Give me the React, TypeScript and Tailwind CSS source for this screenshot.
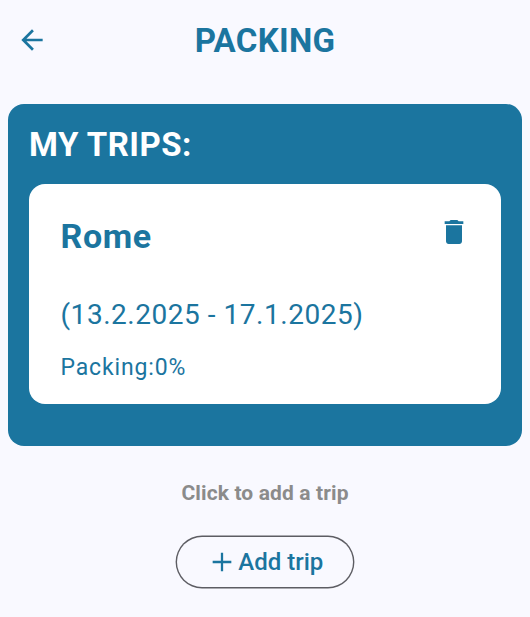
export default function App() {
  return (
    <main className="flex h-[617px] w-[530px] flex-col overflow-hidden bg-[#f9f9ff] font-['Roboto',sans-serif] text-[#1b759f]">
      <header className="grid h-[104px] grid-cols-[64px_1fr_64px] items-start">
        <button aria-label="Back" className="pt-[24px] pl-[15.7px]">
          <svg width="32" height="32" viewBox="0 0 24 24" fill="currentColor">
            <path d="M20 11H7.83l5.59-5.59L12 4l-8 8 8 8 1.41-1.41L7.83 13H20v-2z" />
          </svg>
        </button>
        <h1 className="pt-[21px] text-center text-[33px] leading-[40px] font-bold tracking-[0.3px]">PACKING</h1>
      </header>
      <section className="mx-2 h-[342px] rounded-[16px] bg-[#1b759f] px-[21px] pt-[20.4px]">
        <h2 className="h-[60px] pt-[0.6px] text-[33px] leading-[40px] font-bold tracking-[0.5px] text-white">MY TRIPS:</h2>
        <article className="h-[219.6px] rounded-[16px] bg-white px-[31.5px] pt-[32px]">
          <div className="flex h-[79px] justify-between">
            <h3 className="text-[34px] leading-[40px] font-bold tracking-[0.6px]">Rome</h3>
            <button aria-label="Delete trip" className="h-[32px]">
              <svg width="32" height="32" viewBox="0 0 24 24" fill="currentColor">
                <path d="M6 19c0 1.1.9 2 2 2h8c1.1 0 2-.9 2-2V7H6v12zM19 4h-3.5l-1-1h-5l-1 1H5v2h14V4z" />
              </svg>
            </button>
          </div>
          <p className="h-[54px] text-[28px] leading-[40px] tracking-[0.53px]">(13.2.2025 - 17.1.2025)</p>
          <p className="text-[23px] leading-[37px] tracking-[0.85px]">Packing:0%</p>
        </article>
      </section>
      <p className="pt-[32px] text-center text-[21px] leading-[30px] font-bold tracking-[0.12px] text-[#8b8b8b]">Click to add a trip</p>
      <button className="mt-[29px] flex h-[49.5px] w-[176.4px] items-center self-center rounded-full pl-[29.5px] text-[24px] font-medium shadow-[0_0_0_1.4px_#5d5d63]">
        <svg width="32" height="32" viewBox="0 0 24 24" fill="currentColor">
          <path d="M19 12.85h-6.15v6.15h-1.7v-6.15H5v-1.7h6.15V5h1.7v6.15H19z" />
        </svg>
        <span>Add trip</span>
      </button>
    </main>
  );
}
